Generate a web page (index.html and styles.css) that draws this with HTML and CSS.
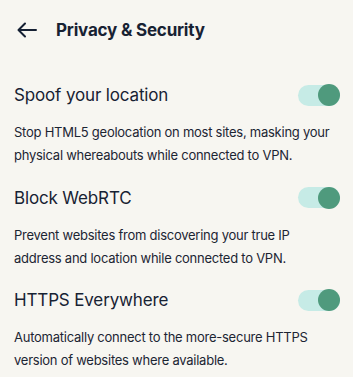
FILE: index.html
```html
<!DOCTYPE html>
<html>
<head>
<meta charset="utf-8">
<link rel="stylesheet" href="styles.css">
</head>
<body>
<div class="page">
  <header class="header">
    <svg class="back" width="20" height="16" viewBox="0 0 20 16" fill="none" stroke="#152033" stroke-width="2" stroke-linecap="round" stroke-linejoin="round">
      <path d="M19 8H2M8 1.5L1.5 8L8 14.5"/>
    </svg>
    <h1 class="title">Privacy &amp; Security</h1>
  </header>
  <section class="setting">
    <div class="row">
      <span class="name">Spoof your location</span>
      <span class="toggle"><span class="knob"></span></span>
    </div>
    <p class="desc">Stop HTML5 geolocation on most sites, masking your physical whereabouts while connected to VPN.</p>
  </section>
  <section class="setting">
    <div class="row">
      <span class="name">Block WebRTC</span>
      <span class="toggle"><span class="knob"></span></span>
    </div>
    <p class="desc">Prevent websites from discovering your true IP address and location while connected to VPN.</p>
  </section>
  <section class="setting">
    <div class="row">
      <span class="name">HTTPS Everywhere</span>
      <span class="toggle"><span class="knob"></span></span>
    </div>
    <p class="desc">Automatically connect to the more-secure HTTPS version of websites where available.</p>
  </section>
</div>
</body>
</html>
```
FILE: styles.css
```css
html, body {
  margin: 0;
  padding: 0;
  background: #f7f6f1;
}
body {
  font-family: Inter, "Noto Sans", sans-serif;
  color: #172233;
  width: 353px;
  height: 377px;
  overflow: hidden;
}
.page {
  padding: 0 13px 0 14px;
}
.header {
  display: flex;
  align-items: center;
  height: 60px;
  padding-left: 3px;
  gap: 19px;
}
.back {
  display: block;
}
.title {
  margin: 0;
  font-size: 17px;
  font-weight: 700;
  letter-spacing: -0.2px;
}
.setting {
  margin-top: 6.5px;
}
.setting:first-of-type {
  margin-top: 11px;
}
.row {
  display: flex;
  align-items: center;
  justify-content: space-between;
  height: 48px;
}
.name {
  font-size: 17px;
  font-weight: 400;
  letter-spacing: -0.15px;
}
.toggle {
  position: relative;
  width: 42px;
  height: 21px;
  border-radius: 11px;
  background: #c6ebe6;
}
.knob {
  position: absolute;
  right: 0;
  top: -0.5px;
  width: 22px;
  height: 22px;
  border-radius: 50%;
  background: #4f9a7d;
}
.desc {
  margin: 0;
  padding-top: 2px;
  font-size: 13px;
  line-height: 23px;
  letter-spacing: -0.25px;
  color: #1c2533;
}
```
